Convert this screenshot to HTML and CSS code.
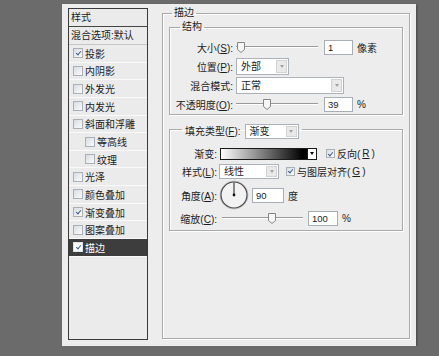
FILE: index.html
```html
<!DOCTYPE html>
<html lang="zh-CN">
<head>
    <meta charset="UTF-8">
    <title>图层样式 - 描边</title>
    <link rel="stylesheet" href="styles.css">
</head>
<body>
    <div class="dialog">
        <div class="styles">
            <div class="styles-head">样式</div>
            <div class="styles-blend">混合选项:默认</div>
            <ul class="style-list">
                <li><span class="cb on"></span>投影</li>
                <li><span class="cb"></span>内阴影</li>
                <li><span class="cb"></span>外发光</li>
                <li><span class="cb"></span>内发光</li>
                <li><span class="cb"></span>斜面和浮雕</li>
                <li class="sub"><span class="cb"></span>等高线</li>
                <li class="sub"><span class="cb"></span>纹理</li>
                <li><span class="cb"></span>光泽</li>
                <li><span class="cb"></span>颜色叠加</li>
                <li><span class="cb on"></span>渐变叠加</li>
                <li><span class="cb"></span>图案叠加</li>
                <li class="active"><span class="cb on"></span>描边</li>
            </ul>
        </div>

        <fieldset class="group stroke">
            <legend>描边</legend>

            <fieldset class="group struct">
                <legend>结构</legend>
                <div class="form">
                    <label>大小(<u>S</u>):</label>
                    <div class="ctl">
                        <span class="slider"><svg class="thumb" style="margin-left:1px" width="8" height="11" viewBox="0 0 8 11"><path d="M0.5 0.5 H7.5 V7.5 L4 10.5 L0.5 7.5 Z" fill="#f6f6f6" stroke="#858585"/></svg></span>
                        <span class="num">1</span>
                        <span class="unit">像素</span>
                    </div>

                    <label>位置(<u>P</u>):</label>
                    <div class="ctl">
                        <span class="select pos"><span class="val">外部</span><span class="arrow"></span></span>
                    </div>

                    <label>混合模式:</label>
                    <div class="ctl">
                        <span class="select mode"><span class="val">正常</span><span class="arrow"></span></span>
                    </div>

                    <label>不透明度(<u>O</u>):</label>
                    <div class="ctl">
                        <span class="slider"><svg class="thumb" style="margin-left:27px" width="8" height="11" viewBox="0 0 8 11"><path d="M0.5 0.5 H7.5 V7.5 L4 10.5 L0.5 7.5 Z" fill="#f6f6f6" stroke="#858585"/></svg></span>
                        <span class="num">39</span>
                        <span class="unit">%</span>
                    </div>
                </div>
            </fieldset>

            <fieldset class="group fill">
                <legend>
                    <span>填充类型(<u>F</u>):</span>
                    <span class="select type"><span class="val">渐变</span><span class="arrow"></span></span>
                </legend>
                <div class="form">
                    <label>渐变:</label>
                    <div class="ctl">
                        <span class="gradient"><span class="bar"></span><span class="drop"></span></span>
                        <span class="check"><span class="cb on"></span>反向(<u>R</u>)</span>
                    </div>

                    <label>样式(<u>L</u>):</label>
                    <div class="ctl">
                        <span class="select kind"><span class="val">线性</span><span class="arrow"></span></span>
                        <span class="check align"><span class="cb on"></span>与图层对齐(<u>G</u>)</span>
                    </div>

                    <label>角度(<u>A</u>):</label>
                    <div class="ctl">
                        <svg class="dial" width="30" height="30" viewBox="0 0 30 30">
                            <circle cx="15" cy="15" r="14" fill="none" stroke="#c4c4c4" stroke-width="1"/>
                            <circle cx="15" cy="15" r="13" fill="#f2f2f2" stroke="#4a4a4a" stroke-width="1.2"/>
                            <line x1="15" y1="15" x2="15" y2="2.5" stroke="#1e1e1e" stroke-width="1"/>
                            <circle cx="15" cy="15" r="1.4" fill="#111"/>
                        </svg>
                        <span class="num angle">90</span>
                        <span class="unit">度</span>
                    </div>

                    <label>缩放(<u>C</u>):</label>
                    <div class="ctl">
                        <span class="slider scale"><svg class="thumb" style="margin-left:46px" width="8" height="11" viewBox="0 0 8 11"><path d="M0.5 0.5 H7.5 V7.5 L4 10.5 L0.5 7.5 Z" fill="#f6f6f6" stroke="#858585"/></svg></span>
                        <span class="num wide">100</span>
                        <span class="unit">%</span>
                    </div>
                </div>
            </fieldset>
        </fieldset>
    </div>
</body>
</html>
```

FILE: styles.css
```css
body {
    margin: 0;
    background: #6b6b6b;
    font-family: "Liberation Sans", "Noto Sans CJK SC", sans-serif;
    font-size: 10px;
    color: #1c1c1c;
}
u {
    text-decoration: underline;
    text-decoration-thickness: 1px;
}
.dialog {
    display: flex;
    align-items: flex-start;
    width: 354px;
    height: 342px;
    margin: 4px 0 0 62px;
    padding: 2px 0 0 6px;
    box-sizing: border-box;
    background: #ededed;
    box-shadow: 1px 1px 2px rgba(0, 0, 0, 0.35);
}

/* left list */
.styles {
    width: 80px;
    height: 332px;
    margin-top: 2px;
    box-sizing: border-box;
    border: 1px solid #3a3a3a;
    background: #ebebeb;
}
.styles-head {
    height: 17px;
    line-height: 17px;
    padding-left: 2px;
    border-bottom: 1px solid #454545;
}
.styles-blend {
    height: 17px;
    line-height: 17px;
    padding-left: 2px;
    border-bottom: 1px solid #c6c6c6;
}
.style-list {
    list-style: none;
    margin: 0;
    padding: 0;
}
.style-list li {
    display: flex;
    align-items: center;
    gap: 2px;
    height: 16.65px;
    padding-left: 4px;
    border-bottom: 1px solid #fafafa;
}
.style-list li.sub {
    padding-left: 16px;
}
.style-list li.active {
    background: #3d3d3d;
    color: #fff;
}
.cb {
    display: inline-flex;
    align-items: center;
    justify-content: center;
    width: 8px;
    height: 8px;
    flex: none;
    border: 1px solid #aab0b8;
    background: linear-gradient(135deg, #d8dce1, #fbfbfb);
}
.cb.on::after {
    content: "";
    width: 2px;
    height: 4px;
    margin-top: -1px;
    border: solid #3f5f8f;
    border-width: 0 1px 1px 0;
    transform: rotate(40deg);
}
.active .cb {
    background: #fff;
    border-color: #dfe3e8;
}

/* right side groups */
.group {
    margin: 0;
    padding: 0;
    min-width: 0;
    border: 1px solid #a9a9a9;
    box-shadow: 1px 1px 0 #fff, inset 1px 1px 0 #fff;
}
.group > legend {
    padding: 0 2px;
    line-height: 14px;
}
.stroke {
    width: 248px;
    height: 333px;
    margin-left: 14px;
    padding: 0 6px;
    box-sizing: border-box;
}
.stroke > legend {
    margin-left: 3px;
}
.struct > legend {
    margin-left: 10px;
}
.fill {
    margin-top: 4px;
    padding: 6px 0 4px;
}
.fill > legend {
    display: flex;
    align-items: center;
    gap: 4px;
    margin-left: 12px;
    padding: 5px 3px 0;
}
.form {
    display: grid;
    grid-template-columns: 63px auto;
    grid-auto-rows: 19px;
    column-gap: 3px;
    align-items: center;
    padding-top: 4px;
}
.fill .form {
    grid-template-columns: 47px auto;
    grid-template-rows: 17px 18px 30px 16px;
    padding-top: 0;
}
.form label {
    text-align: right;
    white-space: nowrap;
}
.ctl {
    display: flex;
    align-items: center;
}

/* controls */
.slider {
    display: flex;
    width: 82px;
    height: 11px;
    background:
        linear-gradient(#9a9a9a, #9a9a9a) 0 4px / 100% 1px no-repeat,
        linear-gradient(#fff, #fff) 0 5px / 100% 1px no-repeat;
}
.slider.scale {
    width: 81px;
    margin-left: 2px;
}
.thumb {
    display: block;
    flex: none;
}
.num {
    display: inline-block;
    width: 29px;
    height: 15px;
    margin-left: 6px;
    padding-left: 3px;
    box-sizing: border-box;
    border: 1px solid #a7aeb7;
    background: #fff;
    line-height: 13px;
    font-size: 9.5px;
}
.num.angle {
    width: 32px;
    margin-left: 3px;
}
.num.wide {
    width: 30px;
    margin-left: 5px;
}
.unit {
    margin-left: 4px;
}
.select {
    display: inline-flex;
    height: 17px;
    box-sizing: border-box;
    border: 1px solid #abb2bb;
    background: #fff;
}
.select .val {
    flex: 1;
    padding-left: 4px;
    line-height: 15px;
}
.select .arrow {
    display: flex;
    align-items: center;
    justify-content: center;
    width: 9px;
    margin: 1px;
    border: 1px solid #d2d2d2;
    background: #e9e9e9;
}
.select .arrow::after {
    content: "";
    border-left: 2.5px solid transparent;
    border-right: 2.5px solid transparent;
    border-top: 3px solid #a3a3a3;
}
.select.pos {
    width: 53px;
}
.select.mode {
    width: 108px;
}
.select.type {
    width: 54px;
    height: 15px;
}
.select.type .val,
.select.kind .val {
    line-height: 13px;
}
.select.kind {
    width: 60px;
    height: 15px;
    margin-left: -1px;
}
.gradient {
    display: flex;
    width: 97px;
    height: 12px;
    box-sizing: border-box;
    border: 1px solid #1a1a1a;
}
.gradient .bar {
    flex: 1;
    background: linear-gradient(to right, #fff, #000 95%);
}
.gradient .drop {
    display: flex;
    align-items: center;
    justify-content: center;
    width: 8px;
    border-left: 1px solid #1a1a1a;
    background: #fff;
}
.gradient .drop::after {
    content: "";
    border-left: 2.5px solid transparent;
    border-right: 2.5px solid transparent;
    border-top: 3px solid #000;
}
.check {
    display: flex;
    align-items: center;
    gap: 2px;
    margin-left: 9px;
}
.check .cb {
    width: 7px;
    height: 7px;
}
.check.align {
    margin-left: 7px;
}
.dial {
    display: block;
    margin-left: -1px;
}
```
